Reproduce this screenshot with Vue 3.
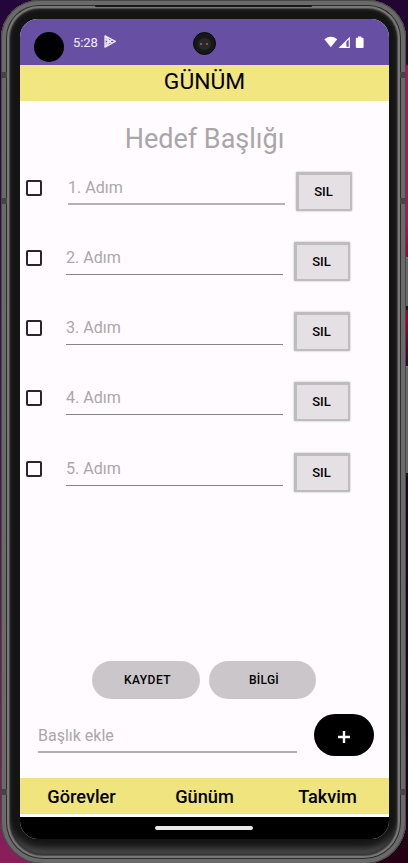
<script setup>
import { ref } from 'vue'

const steps = ref([1, 2, 3, 4, 5].map((n) => ({ n, done: false })))
const tabs = ['Görevler', 'Günüm', 'Takvim']
</script>

<template>
  <div class="desktop">
    <i class="side-key power"></i>
    <i class="side-key volume"></i>
    <div class="phone">
      <i class="seam l1"></i><i class="seam l2"></i><i class="seam l3"></i>
      <i class="seam r1"></i><i class="seam r2"></i><i class="seam r3"></i>
      <i class="speaker"></i>
      <div class="screen">
        <div class="status">
          <i class="dot"></i>
          <span class="clock">5:28</span>
          <svg class="play" viewBox="0 0 12 13" width="12" height="13">
            <path d="M1 .9 L11.3 6.4 L1 12.1 Z M1.2 1.2 L7.6 8.2 M1.2 11.8 L7.6 4.6 M1.2 4 L4.6 6.4 L1.2 9" fill="none" stroke="#eee8f8" stroke-width="1.3" stroke-linejoin="round" />
          </svg>
          <div class="camera"><i></i></div>
          <svg class="signals" viewBox="0 0 40 13" width="40" height="13">
            <path d="M.4 3.3 Q6.8 -1.6 13.2 3.3 L6.8 11.2 Z" fill="#fff" />
            <path d="M14.6 12 L25.8 .8 V12 Z" fill="#fff" />
            <path d="M22.4 5.7 L24.7 3.4 V10.8 H22.4 Z" fill="#6750a4" />
            <path d="M34 .4 h3.4 v1.4 h1.2 q1 0 1 1 v8.2 q0 1 -1 1 h-5.8 q-1 0 -1 -1 v-8.2 q0 -1 1 -1 h1.2 Z" fill="#fff" />
          </svg>
        </div>
        <header class="header">GÜNÜM</header>
        <main class="content">
          <h1 class="title">Hedef Başlığı</h1>
          <div class="steps">
            <div v-for="s in steps" :key="s.n" class="step">
              <span class="check" @click="s.done = !s.done"></span>
              <div class="field">{{ s.n }}. Adım</div>
              <button class="delete">SIL</button>
            </div>
          </div>
          <div class="actions">
            <button class="pill save">KAYDET</button>
            <button class="pill">BİLGİ</button>
          </div>
          <div class="add-row">
            <div class="add-field">Başlık ekle</div>
            <button class="add">
              <svg viewBox="0 0 12 12" width="12" height="12"><path d="M6 0 V12 M0 6 H12" stroke="#fff" stroke-width="2.4" /></svg>
            </button>
          </div>
        </main>
        <nav class="tabs"><span v-for="t in tabs" :key="t">{{ t }}</span></nav>
        <div class="navbar"><i></i></div>
      </div>
    </div>
  </div>
</template>

<style>
body { margin: 0; overflow: hidden; }
</style>

<style scoped>
* { box-sizing: border-box; }
.desktop {
  position: relative;
  width: 408px;
  height: 863px;
  overflow: hidden;
  font-family: Roboto, "Noto Sans", sans-serif;
  background:
    linear-gradient(#220631 0 64px, #c00a68 66px 220px, #a8002c 256px 320px, #2b0540 365px, #17061d 480px, #250015 863px) right / 204px 100% no-repeat,
    linear-gradient(#25063a 0 70px, #40134f 430px, #8a1f58 863px);
}
.phone {
  position: relative;
  width: 405px;
  height: 864px;
  margin-left: 1px;
  padding: 19px 17px 25px 19px;
  border-radius: 38px 38px 42px 42px;
  background: #141414;
  box-shadow:
    inset 0 0 0 1px #484848,
    inset 0 0 0 5px #6a6a6a,
    inset 0 0 0 6px #2c2c2c,
    inset 0 0 0 8px #777,
    inset 0 0 0 9px #4c4c4c,
    inset 0 0 3px 10px #2b2b2b,
    inset 0 -14px 9px 1px #555;
}
.side-key { position: absolute; right: 0; width: 4px; background: #666; border-top: 2px solid #777; border-bottom: 4px solid #161616; }
.power { top: 257px; height: 53px; }
.volume { top: 366px; height: 111px; }
.seam { position: absolute; width: 6px; height: 6px; background: #454545; }
.l1 { left: 0; top: 72px; }
.l2 { left: 0; top: 198px; }
.l3 { left: 0; top: 789px; }
.r1 { right: 0; top: 72px; }
.r2 { right: 0; top: 198px; }
.r3 { right: 0; top: 789px; }
.speaker { position: absolute; left: 94px; top: 5px; width: 217px; height: 2px; border-radius: 1px; background: #171717; }
.screen {
  position: relative;
  display: flex;
  flex-direction: column;
  width: 369px;
  height: 820px;
  overflow: hidden;
  border-radius: 18px;
  background: #fffbfe;
  color: #000;
}
.status { position: relative; display: flex; flex: none; height: 46px; padding: 0 25px 0 14px; background: #6750a4; }
.dot { width: 30px; height: 30px; margin-top: 13px; border-radius: 50%; background: #000; }
.clock { margin: 15px 0 0 9px; color: #f1edf8; font-size: 13px; line-height: 17px; width: 26px; letter-spacing: -.1px; }
.play { margin: 16px 0 0 5px; }
.camera { position: absolute; left: 173px; top: 13px; display: grid; place-items: center; width: 23px; height: 23px; border-radius: 50%; background: #171717; border: 1px solid #080808; }
.camera i { width: 13px; height: 12px; border-radius: 50%; background: radial-gradient(circle at 3px 6px, #8b7b5b 0 .5px, transparent 1.2px), radial-gradient(circle at 9px 6px, #a46a45 0 .5px, transparent 1.2px), #282828; }
.signals { margin: 17px 0 0 auto; }
.header { flex: none; height: 36px; background: #f2e680; text-align: center; font-size: 22.8px; line-height: 33px; }
.content { display: flex; flex: 1; flex-direction: column; min-height: 0; }
.title { margin: 21px 0 0; height: 34px; color: #a9a6a9; font-size: 27px; font-weight: 400; line-height: 34px; text-align: center; }
.steps { display: flex; flex-direction: column; margin-top: 16px; }
.step { display: flex; align-items: flex-start; height: 70.15px; padding-left: 6px; }
.check { width: 16px; height: 16px; margin-top: 8px; border: 2px solid #28262b; border-radius: 2px; }
.field { width: 217px; height: 33px; margin-left: 24px; border-bottom: 1px solid #88838a; color: #aaa7aa; font-size: 16.1px; line-height: 31px; }
.delete {
  width: 56px;
  height: 39px;
  margin-left: 11px;
  padding: 0 2px 0 0;
  border: 2px solid #bdbcbe;
  border-top-width: 3px;
  border-left-width: 3px;
  border-radius: 1px;
  background: #e4e0e4;
  box-shadow: 0 0 2px #aaa;
  color: #000;
  font: 500 13px/34px Roboto, sans-serif;
}
.step:first-child .field { margin-left: 26px; border-bottom: 2px solid #b5b1b5; }
.actions { display: flex; gap: 9px; margin: auto 0 0 72px; }
.pill { width: 108px; height: 38px; padding: 0; border: 0; border-radius: 19px; background: #cbc6ca; color: #000; font: 500 12px/38px Roboto, sans-serif; letter-spacing: .5px; }
.pill:last-child { width: 107px; letter-spacing: .3px; padding-left: 3px; }
.save { padding-left: 3px; }
.add-row { display: flex; align-items: flex-start; height: 64px; margin-top: 15px; padding-left: 18px; }
.add-field { width: 259px; height: 39px; border-bottom: 2px solid #b2aeb2; color: #aaa7aa; font-size: 16px; line-height: 43px; }
.add { display: grid; place-items: center; width: 60px; height: 42px; margin-left: 17px; padding: 3px 0 0; border: 0; border-radius: 21px; background: #000; }
.tabs { display: grid; flex: none; grid-template-columns: repeat(3, 1fr); height: 36px; background: #efe47e; text-align: center; font-size: 18.2px; font-weight: 500; line-height: 37px; }
.navbar { flex: none; height: 25px; border-top: 3px solid #fff; background: #000; display: flex; justify-content: center; }
.navbar i { width: 98px; height: 4px; margin: 9px 1px 0 0; border-radius: 2px; background: #e9e9e9; }
</style>
